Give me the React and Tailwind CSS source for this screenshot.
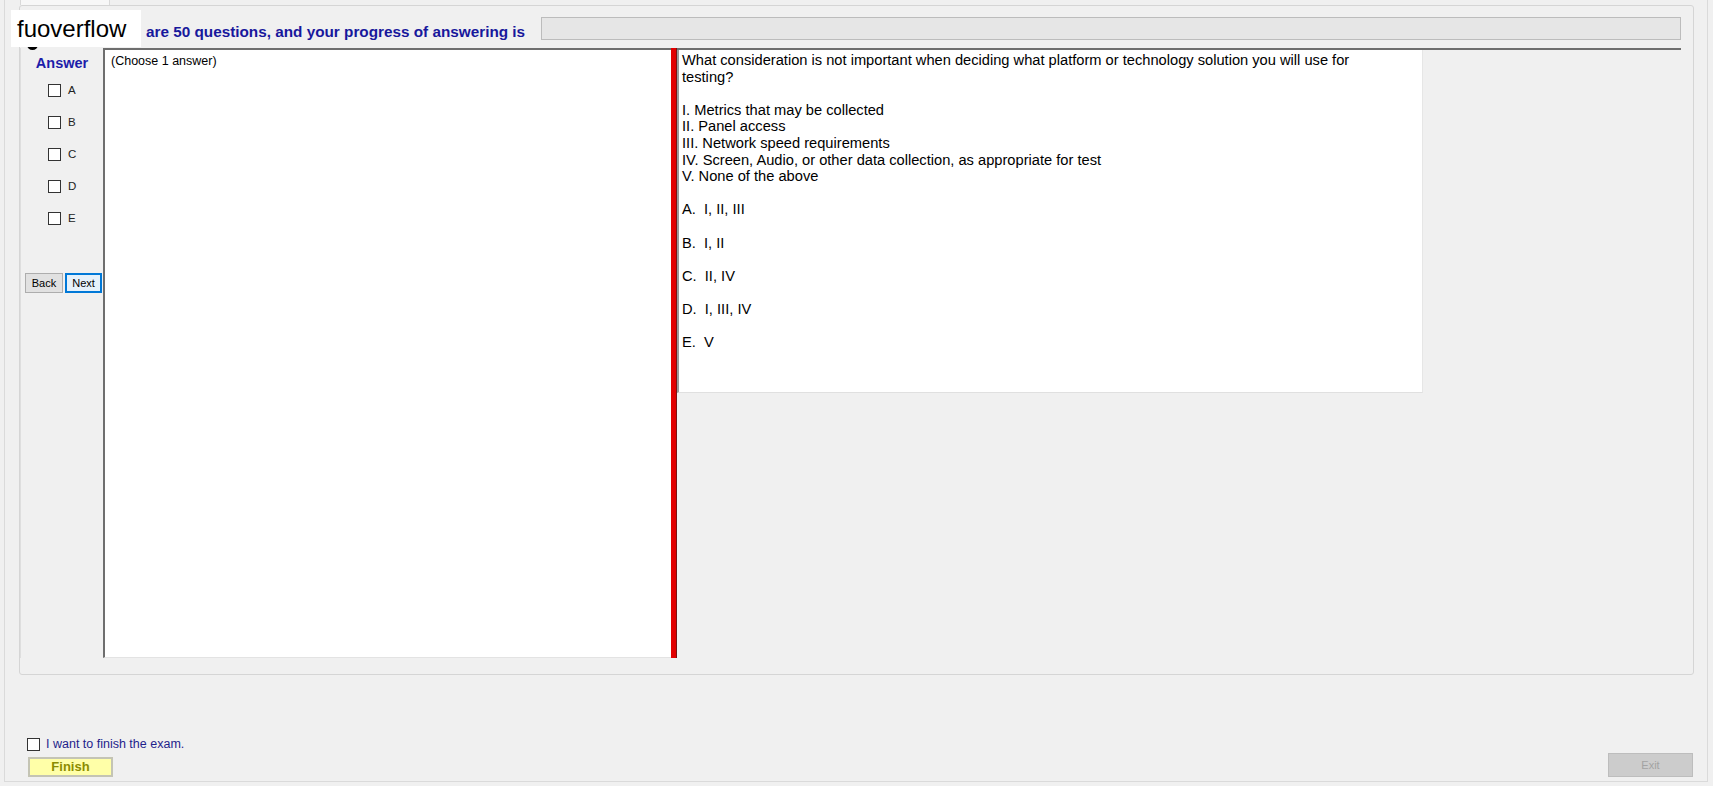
import React, { useState } from "react";

const letters = ["A", "B", "C", "D", "E"];

const statements = [
  "I. Metrics that may be collected",
  "II. Panel access",
  "III. Network speed requirements",
  "IV. Screen, Audio, or other data collection, as appropriate for test",
  "V. None of the above",
];

const options = ["A.  I, II, III", "B.  I, II", "C.  II, IV", "D.  I, III, IV", "E.  V"];

export default function App() {
  const [picked, setPicked] = useState([]);
  const [finish, setFinish] = useState(false);

  const toggle = (l) => {
    setPicked(picked.includes(l) ? picked.filter((x) => x !== l) : [l]);
  };

  return (
    <div className="w-[1713px] h-[786px] overflow-hidden bg-[#f0f0f0] pl-[4px] pr-[5px] pb-[4px] font-['Liberation_Sans',Arial,sans-serif] text-black">
      <div className="relative h-full flex flex-col border-x border-b border-[#dadada]">
        {/* tab header, mostly cut off */}
        <div className="h-[5px] flex pl-[15px]">
          <div className="w-[90px] h-full bg-[#f7f7f7] border-x border-[#d9d9d9]" />
        </div>

        {/* question group box */}
        <div className="ml-[14px] w-[1675px] h-[670px] border border-[#d5d5d5] rounded-[3px] pr-[12px] pb-[16px] flex flex-col">
          <div className="h-[42px] flex items-start">
            <div className="ml-[126px] mt-[18px] text-[15.3px] leading-[15px] font-bold text-[#18189c] whitespace-nowrap">
              are 50 questions, and your progress of answering is
            </div>
            <div className="ml-auto mt-[11px] w-[1140px] h-[23px] bg-[#e6e6e6] border border-[#bcbcbc]" />
          </div>

          <div className="h-[610px] flex">
            {/* answer column */}
            <div className="w-[83px] border-l border-[#dedede] flex flex-col">
              <div className="pt-[7px] text-center text-[14.5px] leading-[17px] font-bold text-[#1d1daa]">Answer</div>
              <div className="mt-[12px] pl-[27px] flex flex-col gap-[19px]">
                {letters.map((l) => (
                  <label key={l} className="h-[13px] flex items-center gap-[7px] text-[11.5px] leading-[13px] text-[#222222] cursor-pointer">
                    <span
                      onClick={() => toggle(l)}
                      className="w-[13px] h-[13px] border border-[#333333] bg-white flex items-center justify-center text-[10px]"
                    >
                      {picked.includes(l) ? "✓" : ""}
                    </span>
                    {l}
                  </label>
                ))}
              </div>
              <div className="mt-[48px] pl-[4px] flex gap-[2px] text-[11px]">
                <button className="w-[38px] h-[20px] bg-[#e1e1e1] border border-[#adadad] leading-[18px]">Back</button>
                <button className="w-[37px] h-[20px] bg-[#e5f1fb] border-2 border-[#0078d7] leading-[16px]">Next</button>
              </div>
            </div>

            {/* explanation panel */}
            <div className="w-[568px] bg-white border-l-2 border-t-2 border-[#6e6e6e] border-b border-b-[#e3e3e3] pl-[6px] pt-[4px] text-[12.5px] leading-[15px]">
              (Choose 1 answer)
            </div>

            {/* splitter */}
            <div className="w-[6px] bg-[#e10000] border-r border-[#7a1212]" />

            {/* question area */}
            <div className="flex-1 border-t-2 border-[#6e6e6e] bg-[#f0f0f0]">
              <div className="w-[746px] h-[343px] bg-white border-l-2 border-[#9a9a9a] border-r border-r-[#e6e6e6] border-b border-b-[#e0e0e0] pl-[3px] pt-[2px] text-[14.67px] leading-[16.6px]">
                <p>
                  What consideration is not important when deciding what platform or technology solution you will use for
                  <br />
                  testing?
                </p>
                <p className="mt-[16.6px]">
                  {statements.map((s) => (
                    <span key={s} className="block">{s}</span>
                  ))}
                </p>
                {options.map((o) => (
                  <p key={o} className="mt-[16.6px] whitespace-pre">{o}</p>
                ))}
              </div>
            </div>
          </div>
        </div>

        {/* bottom bar */}
        <div className="flex-1 flex items-end justify-between pl-[22px] pr-[14px]">
          <div className="mb-[4px] flex flex-col gap-[6px]">
            <label className="h-[13px] flex items-center gap-[6px] text-[12.5px] leading-[13px] text-[#1f1f8c] cursor-pointer">
              <span
                onClick={() => setFinish(!finish)}
                className="w-[13px] h-[13px] border border-[#333333] bg-white flex items-center justify-center text-[10px] text-black"
              >
                {finish ? "✓" : ""}
              </span>
              I want to finish the exam.
            </label>
            <button className="ml-[1px] w-[85px] h-[20px] bg-[#ffffa8] border-2 border-[#c4c4b4] text-[13px] leading-[16px] font-bold text-[#8c8c00]">
              Finish
            </button>
          </div>
          <button className="mb-[4px] w-[85px] h-[24px] bg-[#cccccc] border border-[#bdbdbd] text-[11px] text-[#a3a3a3]">
            Exit
          </button>
        </div>

        {/* watermark over the header */}
        <div className="absolute left-[22px] top-[44px] w-[11px] h-[6px] rounded-b-full bg-black" />
        <div className="absolute left-[6px] top-[10px] w-[130px] h-[37px] bg-white pl-[6px] text-[24px] leading-[37px] text-black">
          fuoverflow
        </div>
      </div>
    </div>
  );
}
